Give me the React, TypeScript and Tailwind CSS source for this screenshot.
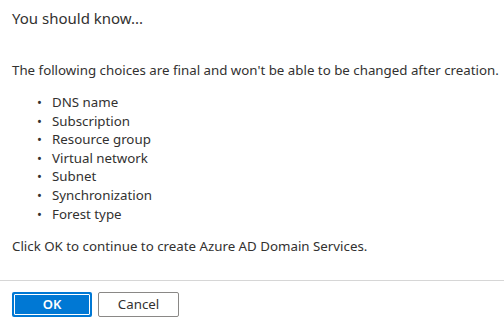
import React from "react";

const items = [
  "DNS name",
  "Subscription",
  "Resource group",
  "Virtual network",
  "Subnet",
  "Synchronization",
  "Forest type",
];

export default function App() {
  return (
    <div
      className="w-[504px] h-[328px] bg-white text-[#323130] flex flex-col overflow-hidden"
      style={{ fontFamily: '"Noto Sans", "Open Sans", sans-serif' }}
    >
      <div className="px-3 pt-[7px] text-[15px] leading-[22px] text-[#323130]">You should know...</div>
      <div className="pl-3 mt-[32px] text-[13.3px] leading-[18px] whitespace-nowrap">
        The following choices are final and won't be able to be changed after creation.
      </div>
      <ul className="mt-[14px] pl-[37px] text-[13.3px] leading-[18.6px]">
        {items.map((t) => (
          <li key={t} className="flex items-center">
            <span className="w-[15px] text-[13px]">•</span>
            <span>{t}</span>
          </li>
        ))}
      </ul>
      <div className="px-3 mt-[14px] text-[13.3px] leading-[18px]">
        Click OK to continue to create Azure AD Domain Services.
      </div>
      <div className="mt-auto border-t border-[#d6d6d6] h-[48px] flex items-center gap-[6px] px-3 pb-[1px] pt-[1px]">
        <button className="w-[80px] h-[25px] rounded-[2px] bg-[#0078d4] text-white text-[13px] font-semibold flex items-center justify-center p-[2px]">
          <span className="w-full h-full border border-white rounded-[1px] flex items-center justify-center">OK</span>
        </button>
        <button className="w-[81px] h-[25px] rounded-[2px] border border-[#8a8886] bg-white text-[#323130] text-[13.3px] flex items-center justify-center">
          Cancel
        </button>
      </div>
    </div>
  );
}
